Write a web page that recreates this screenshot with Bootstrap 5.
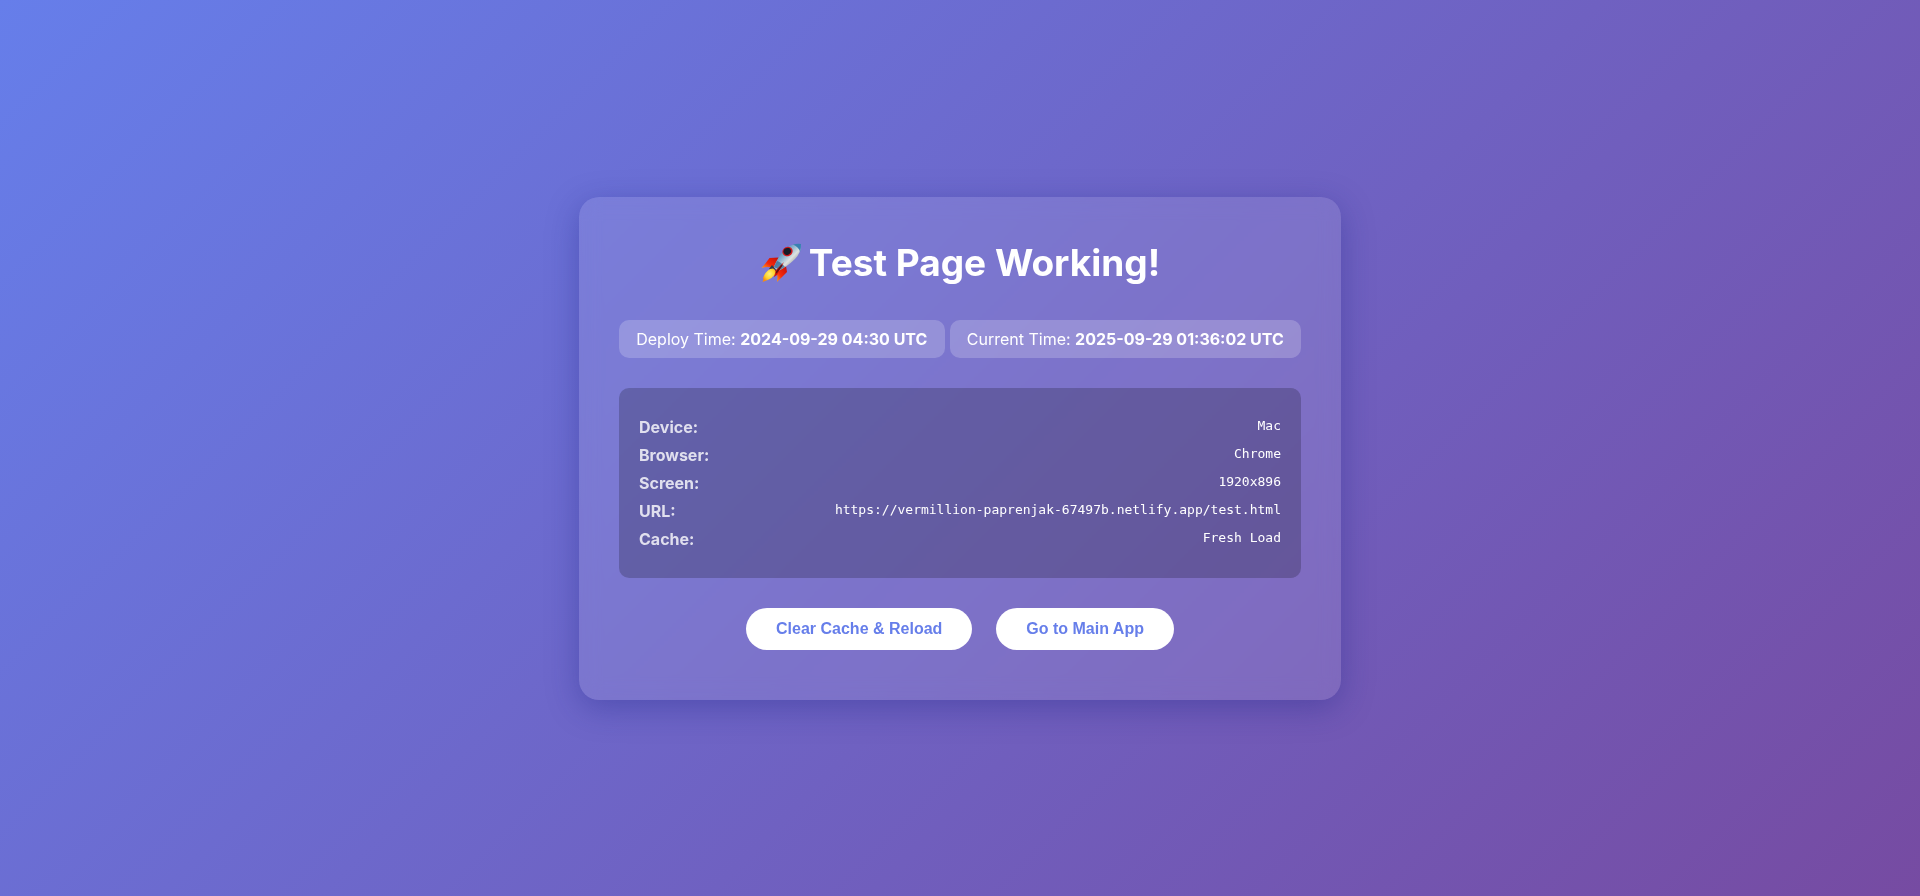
<!DOCTYPE html>
<html lang="en">
<head>
<meta charset="utf-8">
<meta name="viewport" content="width=device-width, initial-scale=1">
<title>Test Page</title>
<link href="https://cdn.jsdelivr.net/npm/bootstrap@5.3.0/dist/css/bootstrap.min.css" rel="stylesheet">
<style>
  body {
    background: linear-gradient(135deg, #667eea 0%, #764ba2 100%);
    font-family: Inter, "Liberation Sans", sans-serif;
    font-size: 16px;
  }
  .test-panel {
    max-width: 762px;
    padding: 40px 40px 50px;
    border-radius: 20px;
    background: rgba(255, 255, 255, .1);
    backdrop-filter: blur(10px);
    box-shadow: 0 8px 32px rgba(31, 38, 135, .37);
  }
  .test-title { font-size: 37px; line-height: 52px; font-weight: 700; margin-bottom: 31px; }
  .rocket { width: 42px; height: 42px; margin-right: 7px; }
  .time-row { gap: 5px; margin-bottom: 30px; }
  .time-pill {
    padding: 8px 16px;
    border-radius: 10px;
    line-height: 22px;
    background: rgba(255, 255, 255, .2);
  }
  .info-box {
    padding: 25px 20px;
    border-radius: 10px;
    background: rgba(0, 0, 0, .2);
    margin-bottom: 30px;
  }
  .info-line { line-height: 28px; }
  .info-line dt { opacity: .8; font-weight: 700; }
  .info-line dd { font: 13px/25px "DejaVu Sans Mono", monospace; }
  .action-row { gap: 24px; }
  .btn-action {
    --bs-btn-color: #667eea;
    --bs-btn-bg: #fff;
    --bs-btn-hover-color: #667eea;
    --bs-btn-hover-bg: #f1f3ff;
    --bs-btn-border-width: 0;
    --bs-btn-padding-x: 30px;
    --bs-btn-padding-y: 12px;
    --bs-btn-line-height: 18px;
    --bs-btn-font-weight: 700;
    --bs-btn-border-radius: 25px;
    --bs-btn-font-family: "Liberation Sans", Arial, sans-serif;
  }
</style>
</head>
<body class="min-vh-100 d-flex align-items-center justify-content-center text-white">
<main class="test-panel w-100">
  <h1 class="test-title d-flex align-items-center justify-content-center">
    <svg class="rocket flex-shrink-0" viewBox="0 0 42 42" aria-hidden="true">
      <defs>
        <linearGradient id="hull" x1="0" y1="0" x2="1" y2="1">
          <stop offset=".2" stop-color="#3d7dad"/><stop offset=".42" stop-color="#8fb6d0"/>
          <stop offset=".58" stop-color="#dfe2e0"/><stop offset=".8" stop-color="#7f8888"/>
        </linearGradient>
        <linearGradient id="fin" x1="0" y1="1" x2="1" y2="0">
          <stop offset="0" stop-color="#ffa51e"/><stop offset=".4" stop-color="#f52a0b"/><stop offset="1" stop-color="#c50c08"/>
        </linearGradient>
        <radialGradient id="flame" cx=".55" cy=".4" r=".6">
          <stop offset="0" stop-color="#fff27a"/><stop offset=".6" stop-color="#ffd22c"/><stop offset="1" stop-color="#f58c13"/>
        </radialGradient>
      </defs>
      <path d="M19 15.500 9.500 16Q6 21 1.500 26Q8 24 13 26Z" fill="url(#fin)"/>
      <path d="M26 24 27 30Q22 35 17 40Q18 34 16.500 30Z" fill="url(#fin)"/>
      <path d="M12 23 17 29 15 33 9 27Z" fill="#2d3949"/>
      <path d="M14 25Q18 14 25 7Q31 1.500 41 2Q41.500 10 35 17Q27 25 18 29Z" fill="url(#hull)"/>
      <path d="M33 2.500Q37 1.500 41 2Q41.300 5.500 40 10Q39 5 33 2.500Z" fill="#3980b1"/>
      <path d="M17 19Q21 20 25 25L20 28 14 25Z" fill="#3b7199" opacity=".8"/>
      <path d="M24 20 17 33 14 35 15 29Z" fill="#d21809"/>
      <path d="M22 23 16 31" stroke="#5d1011" stroke-width="1.500"/>
      <path d="M10 27Q15 25 15.500 30Q15 36 2.500 40Q4 37 3 36Q5 30 10 27Z" fill="url(#flame)"/>
      <ellipse cx="27.500" cy="9.500" rx="5.200" ry="4.600" fill="#d31a20" transform="rotate(-25 27.500 9.500)"/>
      <ellipse cx="27.300" cy="9.300" rx="3.900" ry="3.400" fill="#161b25" transform="rotate(-25 27.300 9.300)"/>
    </svg>
    <span>Test Page Working!</span>
  </h1>

  <div class="time-row d-flex flex-wrap flex-md-nowrap">
    <div class="time-pill flex-fill text-center">Deploy Time: <strong>2024-09-29 04:30 UTC</strong></div>
    <div class="time-pill flex-fill text-center">Current Time: <strong>2025-09-29 01:36:02 UTC</strong></div>
  </div>

  <dl class="info-box">
    <div class="info-line d-flex justify-content-between"><dt>Device:</dt><dd class="mb-0">Mac</dd></div>
    <div class="info-line d-flex justify-content-between"><dt>Browser:</dt><dd class="mb-0">Chrome</dd></div>
    <div class="info-line d-flex justify-content-between"><dt>Screen:</dt><dd class="mb-0">1920x896</dd></div>
    <div class="info-line d-flex justify-content-between"><dt>URL:</dt><dd class="mb-0 text-break">https://vermillion-paprenjak-67497b.netlify.app/test.html</dd></div>
    <div class="info-line d-flex justify-content-between"><dt>Cache:</dt><dd class="mb-0">Fresh Load</dd></div>
  </dl>

  <div class="action-row d-flex flex-wrap justify-content-center">
    <button type="button" class="btn btn-action">Clear Cache &amp; Reload</button>
    <button type="button" class="btn btn-action">Go to Main App</button>
  </div>
</main>
<script src="https://cdn.jsdelivr.net/npm/bootstrap@5.3.0/dist/js/bootstrap.bundle.min.js"></script>
</body>
</html>
